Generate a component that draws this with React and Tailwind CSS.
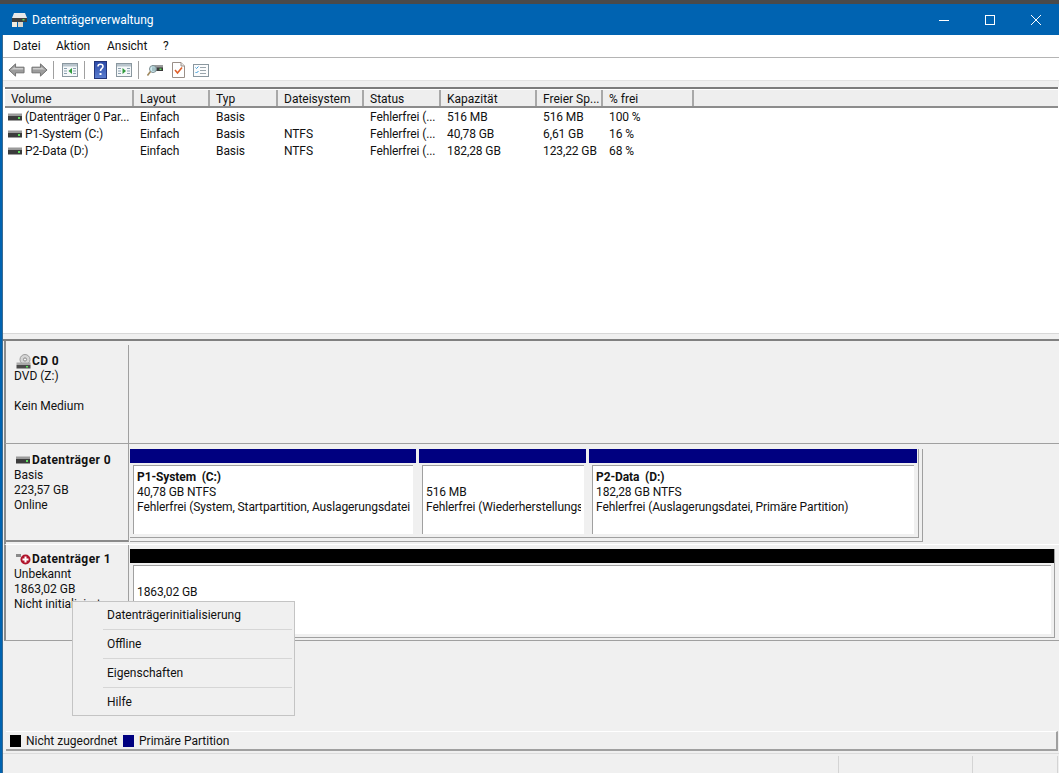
const columns = [
  { title: 'Volume', width: 'w-[129px]' },
  { title: 'Layout', width: 'w-[76px]' },
  { title: 'Typ', width: 'w-[68px]' },
  { title: 'Dateisystem', width: 'w-[86px]' },
  { title: 'Status', width: 'w-[77px]' },
  { title: 'Kapazität', width: 'w-[96px]' },
  { title: 'Freier Sp...', width: 'w-[66px]' },
  { title: '% frei', width: 'w-[91px]' },
];

const volumes = [
  ['(Datenträger 0 Par...', 'Einfach', 'Basis', '', 'Fehlerfrei (...', '516 MB', '516 MB', '100 %'],
  ['P1-System (C:)', 'Einfach', 'Basis', 'NTFS', 'Fehlerfrei (...', '40,78 GB', '6,61 GB', '16 %'],
  ['P2-Data (D:)', 'Einfach', 'Basis', 'NTFS', 'Fehlerfrei (...', '182,28 GB', '123,22 GB', '68 %'],
];

function DriveIcon({ className = '' }) {
  return (
    <svg width="14" height="8" viewBox="0 0 14 8" className={className}>
      <rect x="0" y="0.5" width="14" height="3" fill="#9a9a9a" />
      <rect x="0" y="3" width="14" height="4.5" fill="#3c3c3c" />
      <rect x="10" y="4" width="2" height="2" fill="#5fe05f" />
    </svg>
  );
}

function ArrowIcon({ flip }) {
  return (
    <svg width="17" height="16" viewBox="0 0 18 16" style={flip ? { transform: 'scaleX(-1)' } : undefined}>
      <path d="M1 8 L8 1.5 V5 H17 V11 H8 V14.5 Z" fill="#9c9c9c" stroke="#6e6e6e" strokeWidth="1" />
      <path d="M3 8 L7 4.5 V6 H16 V7.5 H5 Z" fill="#cdcdcd" />
    </svg>
  );
}

function PaneIcon({ left }) {
  return (
    <svg width="16" height="14" viewBox="0 0 16 14">
      <rect x="0.5" y="0.5" width="15" height="13" fill="#f5f8fa" stroke="#8a979f" />
      <rect x="1" y="1" width="14" height="2.5" fill="#b8c4cc" />
      <path d="M2 5.5h3M2 8h3M2 10.5h3M11 5.5h3M11 8h3M11 10.5h3" stroke="#8aa0b0" />
      <path d={left ? 'M10 5 L6.5 8 L10 11 Z' : 'M6.5 5 L10 8 L6.5 11 Z'} fill="#2f9a3c" />
    </svg>
  );
}

function HelpIcon() {
  return (
    <svg width="13" height="18" viewBox="0 0 13 18">
      <defs>
        <linearGradient id="helpFill" x1="0" y1="0" x2="0" y2="1">
          <stop offset="0" stopColor="#2a49a8" />
          <stop offset="1" stopColor="#5c7fd0" />
        </linearGradient>
      </defs>
      <rect x="0.5" y="0.5" width="12" height="17" fill="url(#helpFill)" stroke="#23357a" />
      <path d="M4 5.5 C4 2.5 9 2.5 9 5.5 C9 7.5 6.5 7.5 6.5 10" fill="none" stroke="#fff" strokeWidth="1.6" />
      <rect x="5.5" y="12" width="2" height="2" fill="#fff" />
    </svg>
  );
}

function SearchDriveIcon() {
  return (
    <svg width="16" height="14" viewBox="0 0 16 14">
      <rect x="5" y="2" width="11" height="3" fill="#9a9a9a" />
      <rect x="5" y="4.5" width="11" height="3.5" fill="#3a3a3a" />
      <rect x="12.5" y="5.5" width="2" height="1.5" fill="#5fe05f" />
      <circle cx="6" cy="6" r="3.5" fill="#bfe3ea" fillOpacity="0.8" stroke="#7b8b8f" />
      <path d="M3.5 8.5 L0.5 12.5" stroke="#a08a60" strokeWidth="1.6" />
    </svg>
  );
}

function CheckDocIcon() {
  return (
    <svg width="13" height="16" viewBox="0 0 13 16">
      <path d="M0.5 0.5 H9 L12.5 4 V15.5 H0.5 Z" fill="#fff" stroke="#9a8f88" />
      <path d="M9 0.5 V4 H12.5" fill="#e8e8e8" stroke="#9a8f88" />
      <path d="M3 8 L5.5 11 L10 5.5" fill="none" stroke="#e0602a" strokeWidth="1.6" />
    </svg>
  );
}

function TaskListIcon() {
  return (
    <svg width="16" height="13" viewBox="0 0 16 13">
      <rect x="0.5" y="0.5" width="15" height="12" fill="#fbfcfd" stroke="#8a979f" />
      <path d="M2.5 3.5 L3.5 4.5 L5.5 2.5 M2.5 8 L3.5 9 L5.5 7" fill="none" stroke="#3a9bd8" />
      <path d="M7 3.5h6M7 6.5h6M7 9.5h6" stroke="#9aa5ac" />
    </svg>
  );
}

function CdIcon() {
  return (
    <svg width="15" height="15" viewBox="0 0 15 15">
      <circle cx="9" cy="5.5" r="5" fill="#d6d6d6" stroke="#9c9c9c" />
      <circle cx="9" cy="5.5" r="1.6" fill="#f4f4f4" stroke="#8a8a8a" />
      <rect x="0.5" y="8.5" width="14" height="2.5" fill="#a8a8a8" />
      <rect x="0.5" y="11" width="14" height="3.5" fill="#4a4a4a" />
      <rect x="10" y="12" width="2" height="1.5" fill="#5fe05f" />
    </svg>
  );
}

function ErrorDriveIcon() {
  return (
    <div className="relative w-[15px] h-[13px]">
      <div className="absolute left-0 top-[1px] w-[5px] h-[3px] bg-[#8a8a8a]" />
      <svg width="11" height="11" viewBox="0 0 11 11" className="absolute left-[4px] top-[1px]">
        <circle cx="5.5" cy="5.5" r="5" fill="#b0142c" />
        <rect x="2.5" y="4.5" width="6" height="2" fill="#fff" />
        <rect x="4.5" y="2.5" width="2" height="6" fill="#fff" />
      </svg>
    </div>
  );
}

function Partition({ width, title, lines, barColor = 'bg-[#000080]', barGap = 'mr-[3px]', boxGap = 'pr-[6px]', paddingTop = 'pt-[4px]' }) {
  return (
    <div className={`${width} flex flex-col shrink-0`}>
      <div className={`h-[14px] ${barColor} ${barGap}`} />
      <div className={`flex-1 pt-[2px] pl-[3px] pb-[3px] min-h-0 ${boxGap}`}>
        <div className={`h-full bg-white border-t border-l border-[#a0a0a0] pl-[3px] pr-[3px] ${paddingTop}`}>
          <div className="overflow-hidden whitespace-pre leading-[15px] tracking-[-0.1px]">
            {title && <div className="font-bold">{title}</div>}
            {!title && <div className="h-[15px]" />}
            {lines.map((line) => (
              <div key={line}>{line}</div>
            ))}
          </div>
        </div>
      </div>
    </div>
  );
}

function DiskLabel({ icon, name, lines, className = '', top, nameHeight = 'h-[16px]' }) {
  return (
    <div className={`w-[123px] shrink-0 border-r border-[#a0a0a0] pl-[8px] leading-[15px] ${className}`}>
      <div className={`flex items-center ml-[2px] ${nameHeight} ${top}`}>
        {icon}
        <span className="font-bold ml-[1px] tracking-[0.4px]">{name}</span>
      </div>
      {lines.map((line, index) => (
        <div key={index} className="h-[15px]">{line}</div>
      ))}
    </div>
  );
}

export default function App() {
  return (
    <div
      className="w-[1059px] h-[773px] relative overflow-hidden bg-[#f0f0f0] text-[12px] text-[#111] flex flex-col"
      style={{ fontFamily: 'Roboto, "Noto Sans", sans-serif' }}
    >
      <div className="h-[4px] bg-[#4a4a4a] shrink-0" />

      {/* Title bar */}
      <div className="h-[31px] bg-[#0063b1] flex items-center pl-[11px] pt-[1px] text-white shrink-0">
        <svg width="17" height="16" viewBox="0 0 17 16">
          <path d="M3 1 H14 L16 6 H1 Z" fill="#e8e8e8" />
          <rect x="1" y="6" width="15" height="4" fill="#3f3f3f" />
          <rect x="11.5" y="7" width="2" height="1.5" fill="#5fe05f" />
          <rect x="1" y="10" width="5" height="5" fill="#f0ece0" />
          <rect x="7" y="10" width="5" height="5" fill="#d9d6cc" />
        </svg>
        <span className="ml-[4px]">Datenträgerverwaltung</span>
        <div className="ml-auto flex items-center">
          <div className="w-[46px] flex justify-center">
            <svg width="10" height="10" viewBox="0 0 10 10"><path d="M0 5.5h10" stroke="#fff" /></svg>
          </div>
          <div className="w-[46px] flex justify-center">
            <svg width="10" height="10" viewBox="0 0 10 10"><rect x="0.5" y="0.5" width="9" height="9" fill="none" stroke="#fff" /></svg>
          </div>
          <div className="w-[46px] flex justify-center">
            <svg width="10" height="10" viewBox="0 0 10 10"><path d="M0 0L10 10M10 0L0 10" stroke="#fff" /></svg>
          </div>
        </div>
      </div>

      <div className="flex-1 flex flex-col pl-[3px] bg-white relative min-h-0">
        <div className="absolute left-0 top-0 bottom-0 w-[3px] bg-[#0063b1] border-r border-r-[#3a6a90]" />

        {/* Menu */}
        <div className="h-[23px] bg-white border-b border-[#b4b4b4] flex items-center pl-[10px] shrink-0">
          <span className="w-[43px]">Datei</span>
          <span className="w-[51px]">Aktion</span>
          <span className="w-[56px]">Ansicht</span>
          <span>?</span>
        </div>

        {/* Toolbar */}
        <div className="h-[22px] bg-white flex items-center pl-[5px] pt-[2px] shrink-0">
          <ArrowIcon />
          <div className="w-[6px]" />
          <ArrowIcon flip />
          <div className="w-px h-[18px] bg-[#a0a0a0] ml-[5px] mr-[8px]" />
          <PaneIcon left />
          <div className="w-px h-[18px] bg-[#a0a0a0] ml-[6px] mr-[9px]" />
          <HelpIcon />
          <div className="w-[9px]" />
          <PaneIcon />
          <div className="w-px h-[18px] bg-[#a0a0a0] ml-[6px] mr-[8px]" />
          <SearchDriveIcon />
          <div className="w-[9px]" />
          <CheckDocIcon />
          <div className="w-[8px]" />
          <TaskListIcon />
        </div>

        <div className="h-[7px] bg-[#f0f0f0] border-t border-[#e3e3e3] shrink-0" />

        {/* Volume list */}
        <div className="h-[246px] bg-white border-t-2 border-[#7c7c7c] ml-[2px] shrink-0 mr-[1px]">
          <div className="h-[19px] flex border-b-2 border-[#8c8c8c] bg-[#eeeeee] border-t border-t-white">
            {columns.map((column) => (
              <div key={column.title} className={`${column.width} shrink-0 border-r-2 border-[#a8a8a8] pl-[6px] pt-[1px] leading-[16px] overflow-hidden whitespace-nowrap`}>
                {column.title}
              </div>
            ))}
          </div>
          {volumes.map((row, rowIndex) => (
            <div key={rowIndex} className="flex h-[17px] items-center tracking-[-0.1px]">
              {row.map((cell, cellIndex) => (
                <div key={cellIndex} className={`${columns[cellIndex].width} shrink-0 pl-[6px] overflow-hidden whitespace-nowrap flex items-center`}>
                  {cellIndex === 0 && <DriveIcon className="mr-[3px] -ml-[3px] shrink-0" />}
                  {cell}
                </div>
              ))}
            </div>
          ))}
        </div>

        {/* Splitter */}
        <div className="h-[8px] bg-[#f0f0f0] border-t border-[#d8d8d8] border-b-2 border-b-[#808080] shrink-0" />

        {/* Graphical view */}
        <div className="flex-1 bg-[#f0f0f0] flex flex-col min-h-0">
          <div className="h-[103px] flex border-b border-[#a0a0a0] ml-[1px] border-l-2 border-l-[#8c8c8c] shrink-0">
            <DiskLabel
              icon={<CdIcon />}
              name="CD 0"
              lines={['DVD (Z:)', '', 'Kein Medium']}
              className="mt-[4px]"
              top="mt-[8px]"
            />
          </div>

          <div className="h-[100px] flex ml-[1px] border-l-2 border-l-[#8c8c8c] shrink-0">
            <DiskLabel
              icon={<DriveIcon className="mr-[1px]" />}
              name="Datenträger 0"
              lines={['Basis', '223,57 GB', 'Online']}
              className="h-[98px] border-b-2 border-b-[#8a8a8a]"
              top="mt-[8px]"
            />
            <div className="pl-[1px] pt-[5px] pb-[2px] w-[794px]">
              {/* double frame around the disk's partitions */}
              <div className="h-full border-r border-b border-[#a0a0a0] pr-[3px] pb-[3px]">
                <div className="h-full flex border-r border-b border-[#a0a0a0] pr-[1px]">
                  <Partition
                    width="w-[289px]"
                    title="P1-System  (C:)"
                    lines={['40,78 GB NTFS', 'Fehlerfrei (System, Startpartition, Auslagerungsdatei']}
                  />
                  <Partition
                    width="w-[170px]"
                    boxGap="pr-[5px]"
                    lines={['516 MB', 'Fehlerfrei (Wiederherstellungs']}
                  />
                  <Partition
                    width="w-[328px]"
                    barGap=""
                    boxGap="pr-[3px]"
                    title="P2-Data  (D:)"
                    lines={['182,28 GB NTFS', 'Fehlerfrei (Auslagerungsdatei, Primäre Partition)']}
                  />
                </div>
              </div>
            </div>
          </div>

          <div className="h-[97px] flex ml-[1px] border-l-2 border-l-[#8c8c8c] shrink-0 border-b border-[#a0a0a0] border-t border-t-white">
            <DiskLabel
              icon={<ErrorDriveIcon />}
              name="Datenträger 1"
              lines={['Unbekannt', '1863,02 GB', 'Nicht initialisiert']}
              nameHeight="h-[15px]"
              top="mt-[7px]"
            />
            <div className="pl-[1px] pt-[4px] flex-1 pr-[4px] pb-[2px] flex">
              <div className="flex-1 border-r border-b border-[#a0a0a0]">
                <Partition
                  width="w-full h-full"
                  barColor="bg-black"
                  barGap=""
                  boxGap="pr-[3px]"
                  lines={['1863,02 GB']}
                  paddingTop="pt-[4px]"
                />
              </div>
            </div>
          </div>

          <div className="flex-1" />

          {/* Legend */}
          <div className="h-[20px] flex items-center bg-[#f0f0f0] ml-[3px] border-t border-white border-b-2 border-b-[#a0a0a0] border-r-2 border-r-[#a0a0a0] pl-[4px] mr-[1px] shrink-0">
            <div className="w-[11px] h-[12px] bg-black" />
            <span className="ml-[5px] w-[92px]">Nicht zugeordnet</span>
            <div className="w-[11px] h-[12px] bg-[#000080] ml-[5px]" />
            <span className="ml-[5px]">Primäre Partition</span>
          </div>

          {/* Status bar */}
          <div className="h-[22px] shrink-0 pt-[2px]">
            <div className="h-full flex border-t border-[#dcdcdc] pt-[2px]">
              <div className="ml-auto w-[134px] border-l border-[#d4d4d4]" />
              <div className="w-[86px] border-l border-r border-[#d4d4d4] mr-[1px]" />
            </div>
          </div>
        </div>
      </div>

      {/* Context menu */}
      <div className="absolute left-[72px] top-[601px] w-[223px] h-[115px] bg-[#f0f0f0] border border-[#c4c4c4] pl-[30px] pr-[2px]">
        {['Datenträgerinitialisierung', 'Offline', 'Eigenschaften', 'Hilfe'].map((item, index) => (
          <div
            key={item}
            className={`pl-[4px] flex items-center ${index === 0 ? 'h-[28px] pb-[1px]' : 'h-[29px]'} ${index === 3 ? 'pb-[1px]' : ''} ${index < 3 ? 'border-b border-[#d6d6d6]' : ''}`}
          >
            {item}
          </div>
        ))}
      </div>
    </div>
  );
}
